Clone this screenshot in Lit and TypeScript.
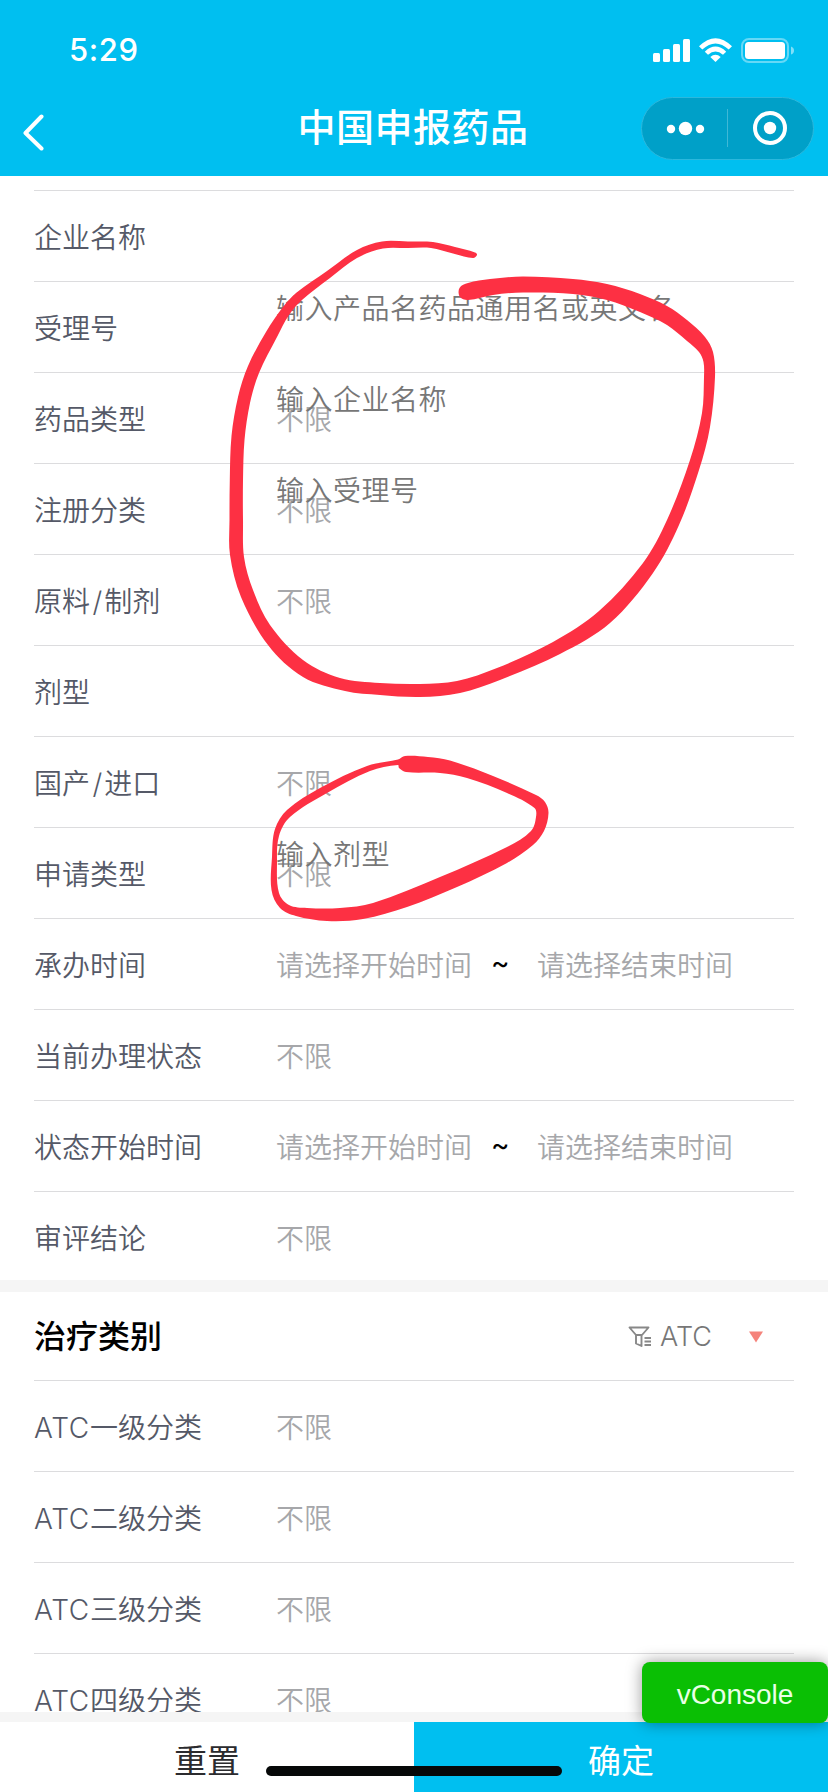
import { LitElement, html, css, svg, nothing } from "lit";
import { customElement, property } from "lit/decorators.js";

type Point = [number, number];

/** Closed smooth curve through the points; handles scale with each segment's length. */
function smooth(points: Point[]): string {
  const n = points.length;
  const at = (i: number) => points[(i + n) % n];
  const dir = (i: number): Point => {
    const p = at(i - 1);
    const q = at(i + 1);
    const l = Math.hypot(q[0] - p[0], q[1] - p[1]) || 1;
    return [(q[0] - p[0]) / l, (q[1] - p[1]) / l];
  };
  const r = (v: number) => v.toFixed(1);
  let d = `M${points[0][0]} ${points[0][1]}`;
  for (let i = 0; i < n; i++) {
    const b = at(i);
    const c = at(i + 1);
    const k = Math.hypot(c[0] - b[0], c[1] - b[1]) / 3;
    const u = dir(i);
    const v = dir(i + 1);
    d += `C${r(b[0] + u[0] * k)} ${r(b[1] + u[1] * k)} ${r(c[0] - v[0] * k)} ${r(c[1] - v[1] * k)} ${c[0]} ${c[1]}`;
  }
  return d + "Z";
}

const LARGE_LOOP: Point[] = [
  [475, 252.5], [455, 247], [433, 242], [408, 241.5], [382, 241.5], [357, 250], [327, 271], [296, 293], [283, 307], [266, 332], [248, 366],
  [238, 397], [231.5, 436], [229.8, 480], [229.5, 520], [230, 555], [241, 597], [268, 645], [303, 677], [345, 691],
  [380, 695], [420, 697], [460, 693], [500, 680], [560, 654], [610, 623], [653, 573], [679, 525], [699, 470],
  [710, 427], [715, 377], [713, 352], [705, 337], [687, 320], [667, 306], [640, 294], [607, 284], [573, 279],
  [523, 276.5], [490, 279], [468, 283], [459.5, 288], [460, 297], [468, 300], [493, 295], [523, 292.5], [573, 294], [607, 300],
  [640, 312], [667, 325], [687, 341], [699, 352], [703.5, 362], [704, 377], [702, 413], [690, 460], [667, 520],
  [643, 563], [599, 611], [553, 642], [497, 668], [457, 681], [420, 684], [380, 683], [340, 678], [303, 660],
  [270, 625], [253, 590], [244, 557], [243, 520], [243, 480], [244.5, 440], [250, 403], [259, 373], [277, 337], [289, 315], [302, 300],
  [330, 278], [357, 258], [383, 248.5], [408, 248], [431, 248], [453, 253.5], [473, 258], [477, 255],
];

const SMALL_LOOP_OUTER: Point[] = [
  [405, 756], [428, 757], [450, 760.5], [493, 776], [536, 795], [545, 802], [548.5, 813], [544, 831], [533, 845],
  [507, 863], [457, 887], [407, 907], [363, 919], [327, 921], [296, 916], [280, 908], [271.5, 890], [272, 857],
  [275, 829], [287, 810], [320, 788], [367, 766], [398, 759.5],
];

const SMALL_LOOP_INNER: Point[] = [
  [399, 768], [406, 772], [440, 773], [467, 778], [507, 793], [534.5, 808], [536, 817], [531, 831], [507, 847],
  [440, 877], [373, 903], [340, 908], [307, 908], [289, 905], [279, 893], [277, 863], [279, 836], [290, 817],
  [327, 793], [370, 771], [398, 765],
];

const UNLIMITED = "不限";

@customElement("status-bar")
class StatusBar extends LitElement {
  static styles = css`
    :host { display: flex; justify-content: space-between; align-items: center; height: 100px; padding: 0 34px 0 69px; box-sizing: border-box; color: #fff; }
    .time { font: 500 31px/38px Inter, sans-serif; letter-spacing: 0.6px; }
    svg { display: block; }
  `;
  render() {
    return html`
      <span class="time">5:29</span>
      <svg width="143" height="28" viewBox="651 35 143 28" fill="#fff">
        <rect x="653" y="52" width="7" height="9" rx="1.5" />
        <rect x="663" y="48" width="7" height="13" rx="1.5" />
        <rect x="673" y="43" width="7" height="18" rx="1.5" />
        <rect x="683" y="38" width="7" height="23" rx="1.5" />
        <path d="M699 45.300 702.300 48.500Q715.500 36.500 728.700 48.500L732 45.300Q715.500 29 699 45.300Z" />
        <path d="M704.800 50.700 708 53.800Q715.500 47 723 53.800L726.200 50.700Q715.500 40.500 704.800 50.700Z" />
        <path d="M710.300 56 715.500 61 720.700 56Q715.500 51.700 710.300 56Z" />
        <rect x="742" y="38" width="46" height="23" rx="7" fill="none" stroke="#fff" stroke-opacity=".4" stroke-width="2" />
        <rect x="745" y="41" width="40" height="17" rx="3.500" />
        <path d="M791 45.500q3 1 3 4t-3 4Z" fill-opacity=".5" />
      </svg>
    `;
  }
}

@customElement("nav-bar")
class NavBar extends LitElement {
  @property() heading = "";
  static styles = css`
    :host { display: grid; grid-template-columns: 1fr auto 1fr; grid-template-rows: 56px; align-items: center; height: 76px; padding: 0 14px 20px 22px; box-sizing: border-box; color: #fff; }
    .back { display: block; margin-top: 7px; }
    .title { font: 500 38px/56px "Noto Sans CJK SC", sans-serif; letter-spacing: 0.5px; padding-right: 10px; margin-top: -6px; }
    .capsule { justify-self: end; display: flex; align-items: center; width: 173px; height: 63px; box-sizing: border-box; border: 1px solid #2cb8dd; border-radius: 32px; background: #00a0c8; }
    .capsule svg { display: block; }
  `;
  render() {
    return html`
      <svg class="back" width="24" height="38" viewBox="0 0 24 38" fill="none" stroke="#fff" stroke-width="4" stroke-linecap="round" stroke-linejoin="round"><path d="M19.500 3.500 3.500 20 19.500 35.500" /></svg>
      <span class="title">${this.heading}</span>
      <div class="capsule">
        <svg width="171" height="61" viewBox="642 98 171 61" fill="#fff">
          <circle cx="671" cy="129" r="4.200" /><circle cx="685.500" cy="128.500" r="6.700" /><circle cx="700" cy="129" r="4.200" />
          <path d="M727 109h1v38h-1z" fill-opacity=".25" />
          <circle cx="770" cy="128" r="15" fill="none" stroke="#fff" stroke-width="4" /><circle cx="770" cy="128" r="6.200" />
        </svg>
      </div>
    `;
  }
}

@customElement("filter-row")
class FilterRow extends LitElement {
  @property() label = "";
  @property() value = "";
  @property() start = "";
  @property() end = "";
  @property() hint = "";
  @property({ type: Boolean, reflect: true }) plain = false;
  @property({ type: Boolean, reflect: true }) tail = false;
  static styles = css`
    :host { display: flex; align-items: center; position: relative; height: 91px; flex: none; box-sizing: border-box; margin: 0 34px; border-bottom: 1px solid #dcdcde; font: 350 28px/40px Inter, "Noto Sans CJK SC", sans-serif; white-space: nowrap; }
    :host([plain]) { height: 88px; padding-top: 3px; border-bottom-color: transparent; }
    :host([tail]) { height: 15px; }
    .label { width: 242px; color: #555967; padding-top: 4px; }
    .latin { font-weight: 300; letter-spacing: 0.7px; }
    .slash { margin: 0 2px 0 2.5px; }
    .value { color: #a6a7aa; padding-top: 4px; }
    .start { width: 215px; }
    .tilde { width: 46px; color: #000; font-weight: 400; margin-top: -2px; }
    .hint { position: absolute; left: 242px; bottom: -139px; color: #777; letter-spacing: 0.5px; z-index: 1; }
  `;
  render() {
    const parts = this.label.split(/(\/|ATC)/).filter(Boolean);
    return html`
      <span class="label">${parts.map((p) =>
        p === "/" ? html`<span class="slash">/</span>` : p === "ATC" ? html`<span class="latin">ATC</span>` : p)}</span>
      ${this.start
        ? html`<span class="value start">${this.start}</span><span class="tilde">~</span><span class="value">${this.end}</span>`
        : html`<span class="value">${this.value}</span>`}
      ${this.hint ? html`<span class="hint">${this.hint}</span>` : nothing}
    `;
  }
}

@customElement("section-title")
class SectionTitle extends LitElement {
  static styles = css`
    :host { display: flex; align-items: center; justify-content: space-between; height: 89px; flex: none; box-sizing: border-box; margin: 0 34px; border-bottom: 1px solid #dcdcde; }
    .title { font: 500 32px/46px "Noto Sans CJK SC", sans-serif; color: #000; margin-top: -5px; }
    .picker { display: flex; align-items: center; padding: 1px 31px 0 0; color: #777; font: 300 27px/40px Inter, sans-serif; }
    .funnel { margin-right: 8px; }
    .arrow { margin-left: 37px; }
    svg { display: block; }
  `;
  render() {
    return html`
      <span class="title">治疗类别</span>
      <div class="picker">
        <svg class="funnel" width="24" height="22" viewBox="0 0 24 22" fill="none" stroke="#888" stroke-width="1.900" stroke-linejoin="round">
          <path d="M1.500 1.500H20.500L14 9H8ZM8 9V17.500L13.500 20V9M16.500 12H23M16.500 15.500H23M16.500 19H23" />
        </svg>
        <span>ATC</span>
        <svg class="arrow" width="14" height="12" viewBox="0 0 14 12" fill="#f5837b"><path d="M0 0.500H14L7 11.500Z" /></svg>
      </div>
    `;
  }
}

@customElement("app-root")
class AppRoot extends LitElement {
  static styles = css`
    :host { display: flex; flex-direction: column; position: relative; width: 828px; height: 1792px; overflow: hidden; background: #fff; }
    .top { flex: none; background: #00bff0; }
    .form { flex: 1; min-height: 0; display: flex; flex-direction: column; overflow: hidden; }
    .band { flex: none; height: 12px; background: #f5f5f5; }
    .bottom-band { height: 10px; }
    .footer { flex: none; display: grid; grid-template-columns: 1fr 1fr; height: 70px; font: 400 33px/74px "Noto Sans CJK SC", sans-serif; text-align: center; color: #2b2b2e; }
    .footer span { height: 70px; }
    .confirm { background: #00bff0; color: #fff; }
    .console { position: absolute; right: 0; bottom: 69px; width: 186px; height: 61px; border-radius: 8px; background: #0abf04; color: #e9ffe6; font: 400 28px/65px "Liberation Sans", sans-serif; text-align: center; box-shadow: 0 0 16px rgba(0, 0, 0, 0.4); z-index: 3; }
    .home { position: absolute; left: 266px; bottom: 16px; width: 296px; height: 10px; border-radius: 5px; background: #060808; z-index: 3; }
    .ink { position: absolute; inset: 0; z-index: 2; pointer-events: none; }
  `;
  render() {
    return html`
      <div class="top">
        <status-bar></status-bar>
        <nav-bar heading="中国申报药品"></nav-bar>
      </div>
      <div class="form">
        <filter-row tail hint="输入产品名药品通用名或英文名"></filter-row>
        <filter-row label="企业名称" hint="输入企业名称"></filter-row>
        <filter-row label="受理号" hint="输入受理号"></filter-row>
        <filter-row label="药品类型" value=${UNLIMITED}></filter-row>
        <filter-row label="注册分类" value=${UNLIMITED}></filter-row>
        <filter-row label="原料/制剂" value=${UNLIMITED}></filter-row>
        <filter-row label="剂型" hint="输入剂型"></filter-row>
        <filter-row label="国产/进口" value=${UNLIMITED}></filter-row>
        <filter-row label="申请类型" value=${UNLIMITED}></filter-row>
        <filter-row label="承办时间" start="请选择开始时间" end="请选择结束时间"></filter-row>
        <filter-row label="当前办理状态" value=${UNLIMITED}></filter-row>
        <filter-row label="状态开始时间" start="请选择开始时间" end="请选择结束时间"></filter-row>
        <filter-row plain label="审评结论" value=${UNLIMITED}></filter-row>
        <div class="band"></div>
        <section-title></section-title>
        ${["一", "二", "三", "四"].map((n) => html`<filter-row label="ATC${n}级分类" value=${UNLIMITED}></filter-row>`)}
      </div>
      <div class="band bottom-band"></div>
      <div class="footer">
        <span>重置</span>
        <span class="confirm">确定</span>
      </div>
      <svg class="ink" width="828" height="1792" viewBox="0 0 828 1792" fill="#fd3043" fill-rule="evenodd">
        ${svg`<path d=${smooth(LARGE_LOOP)} /><path d=${smooth(SMALL_LOOP_OUTER) + smooth(SMALL_LOOP_INNER)} />`}
      </svg>
      <div class="console">vConsole</div>
      <div class="home"></div>
    `;
  }
}
